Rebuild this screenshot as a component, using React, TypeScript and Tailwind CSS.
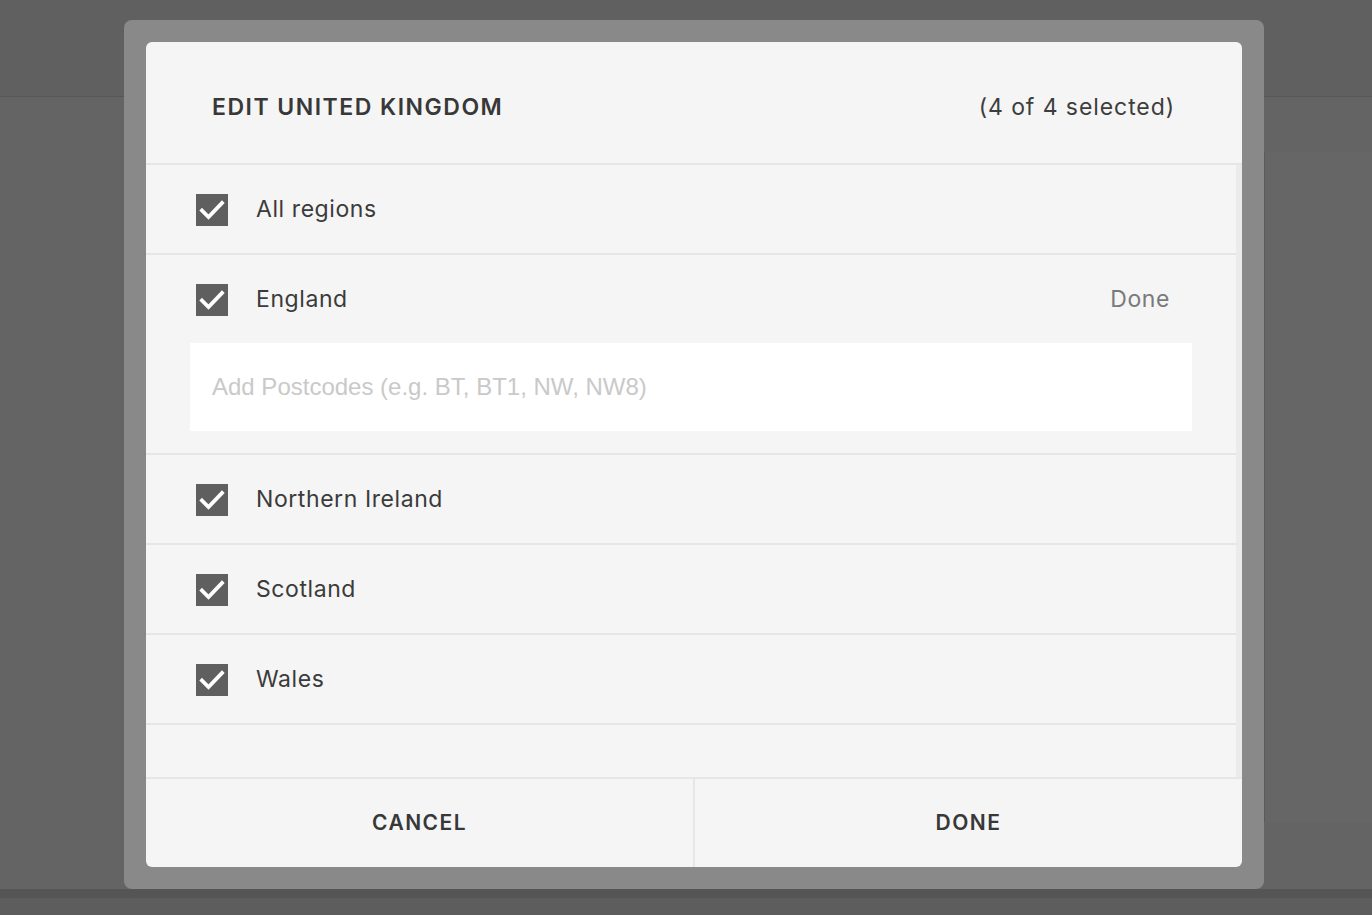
import React from "react";

const regions = [
  { name: "All regions" },
  { name: "England", editing: true },
  { name: "Northern Ireland" },
  { name: "Scotland" },
  { name: "Wales" },
];

function CheckBox() {
  return (
    <span className="flex h-[32px] w-[32px] shrink-0 items-center justify-center bg-[#5f5f5f]">
      <svg width="26" height="22" viewBox="0 0 26 22" fill="none">
        <path d="M3 11.5 L9.5 18 L23 4" stroke="#ffffff" strokeWidth="3.8" strokeLinecap="square" />
      </svg>
    </span>
  );
}

export default function App() {
  return (
    <div
      className="relative h-[915px] w-full overflow-hidden bg-[#646464]"
      style={{ fontFamily: "Inter, 'Noto Sans', sans-serif" }}
    >
      {/* page behind the overlay */}
      <div className="h-[97px] border-b border-[#575757] bg-[#606060]" />
      <div className="absolute left-[1264px] top-[152px] h-[670px] w-[108px] border-l border-[#5a5a5a] bg-[#666666]" />
      <div className="absolute bottom-0 left-0 h-[26px] w-full bg-[#5d5d5d]">
        <div className="h-[9px] bg-[#555555]" />
      </div>

      {/* modal */}
      <div className="absolute left-[124px] top-[20px] h-[869px] w-[1140px] rounded-[8px] bg-[#898989] p-[22px]">
        <div className="flex h-[825px] flex-col overflow-hidden rounded-[6px] bg-[#f5f5f5] text-[#3b3b3b]">
          <div className="flex h-[123px] shrink-0 items-center justify-between border-b-2 border-[#e6e6e6] pl-[66px] pr-[67px] pt-[10px]">
            <h2 className="text-[23px] font-semibold tracking-[0.065em] text-[#383838]">EDIT UNITED KINGDOM</h2>
            <span className="text-[23px] tracking-[0.04em] text-[#3d3d3d]">(4 of 4 selected)</span>
          </div>

          <div className="flex flex-1 border-b-2 border-[#e6e6e6]">
            <div className="flex-1">
              {regions.map((r) => (
                <div key={r.name} className="border-b-2 border-[#e6e6e6]">
                  <div className="flex h-[88px] items-center pl-[50px] pr-[66px] pt-[1px]">
                    <CheckBox />
                    <span className="ml-[28px] text-[23px] tracking-[0.025em] text-[#3b3b3b]">{r.name}</span>
                    {r.editing && (
                      <span className="ml-auto text-[23px] tracking-[0.025em] text-[#7a7a7a]">Done</span>
                    )}
                  </div>
                  {r.editing && (
                    <div className="px-[44px] pb-[22px]">
                      <input
                        className="h-[88px] w-full bg-white px-[22px] text-[24px] text-[#3b3b3b] outline-none placeholder:text-[#c9c9c9]"
                        style={{ fontFamily: "'Liberation Sans', Arial, sans-serif" }}
                        placeholder="Add Postcodes (e.g. BT, BT1, NW, NW8)"
                      />
                    </div>
                  )}
                </div>
              ))}
            </div>
            <div className="w-[6px] bg-[#ebebeb]" />
          </div>

          <div className="flex h-[88px] shrink-0">
            <button className="flex-1 border-r-2 border-[#e6e6e6] text-[21px] font-semibold tracking-[0.07em] text-[#383838]">
              CANCEL
            </button>
            <button className="flex-1 text-[21px] font-semibold tracking-[0.07em] text-[#383838]">DONE</button>
          </div>
        </div>
      </div>
    </div>
  );
}
